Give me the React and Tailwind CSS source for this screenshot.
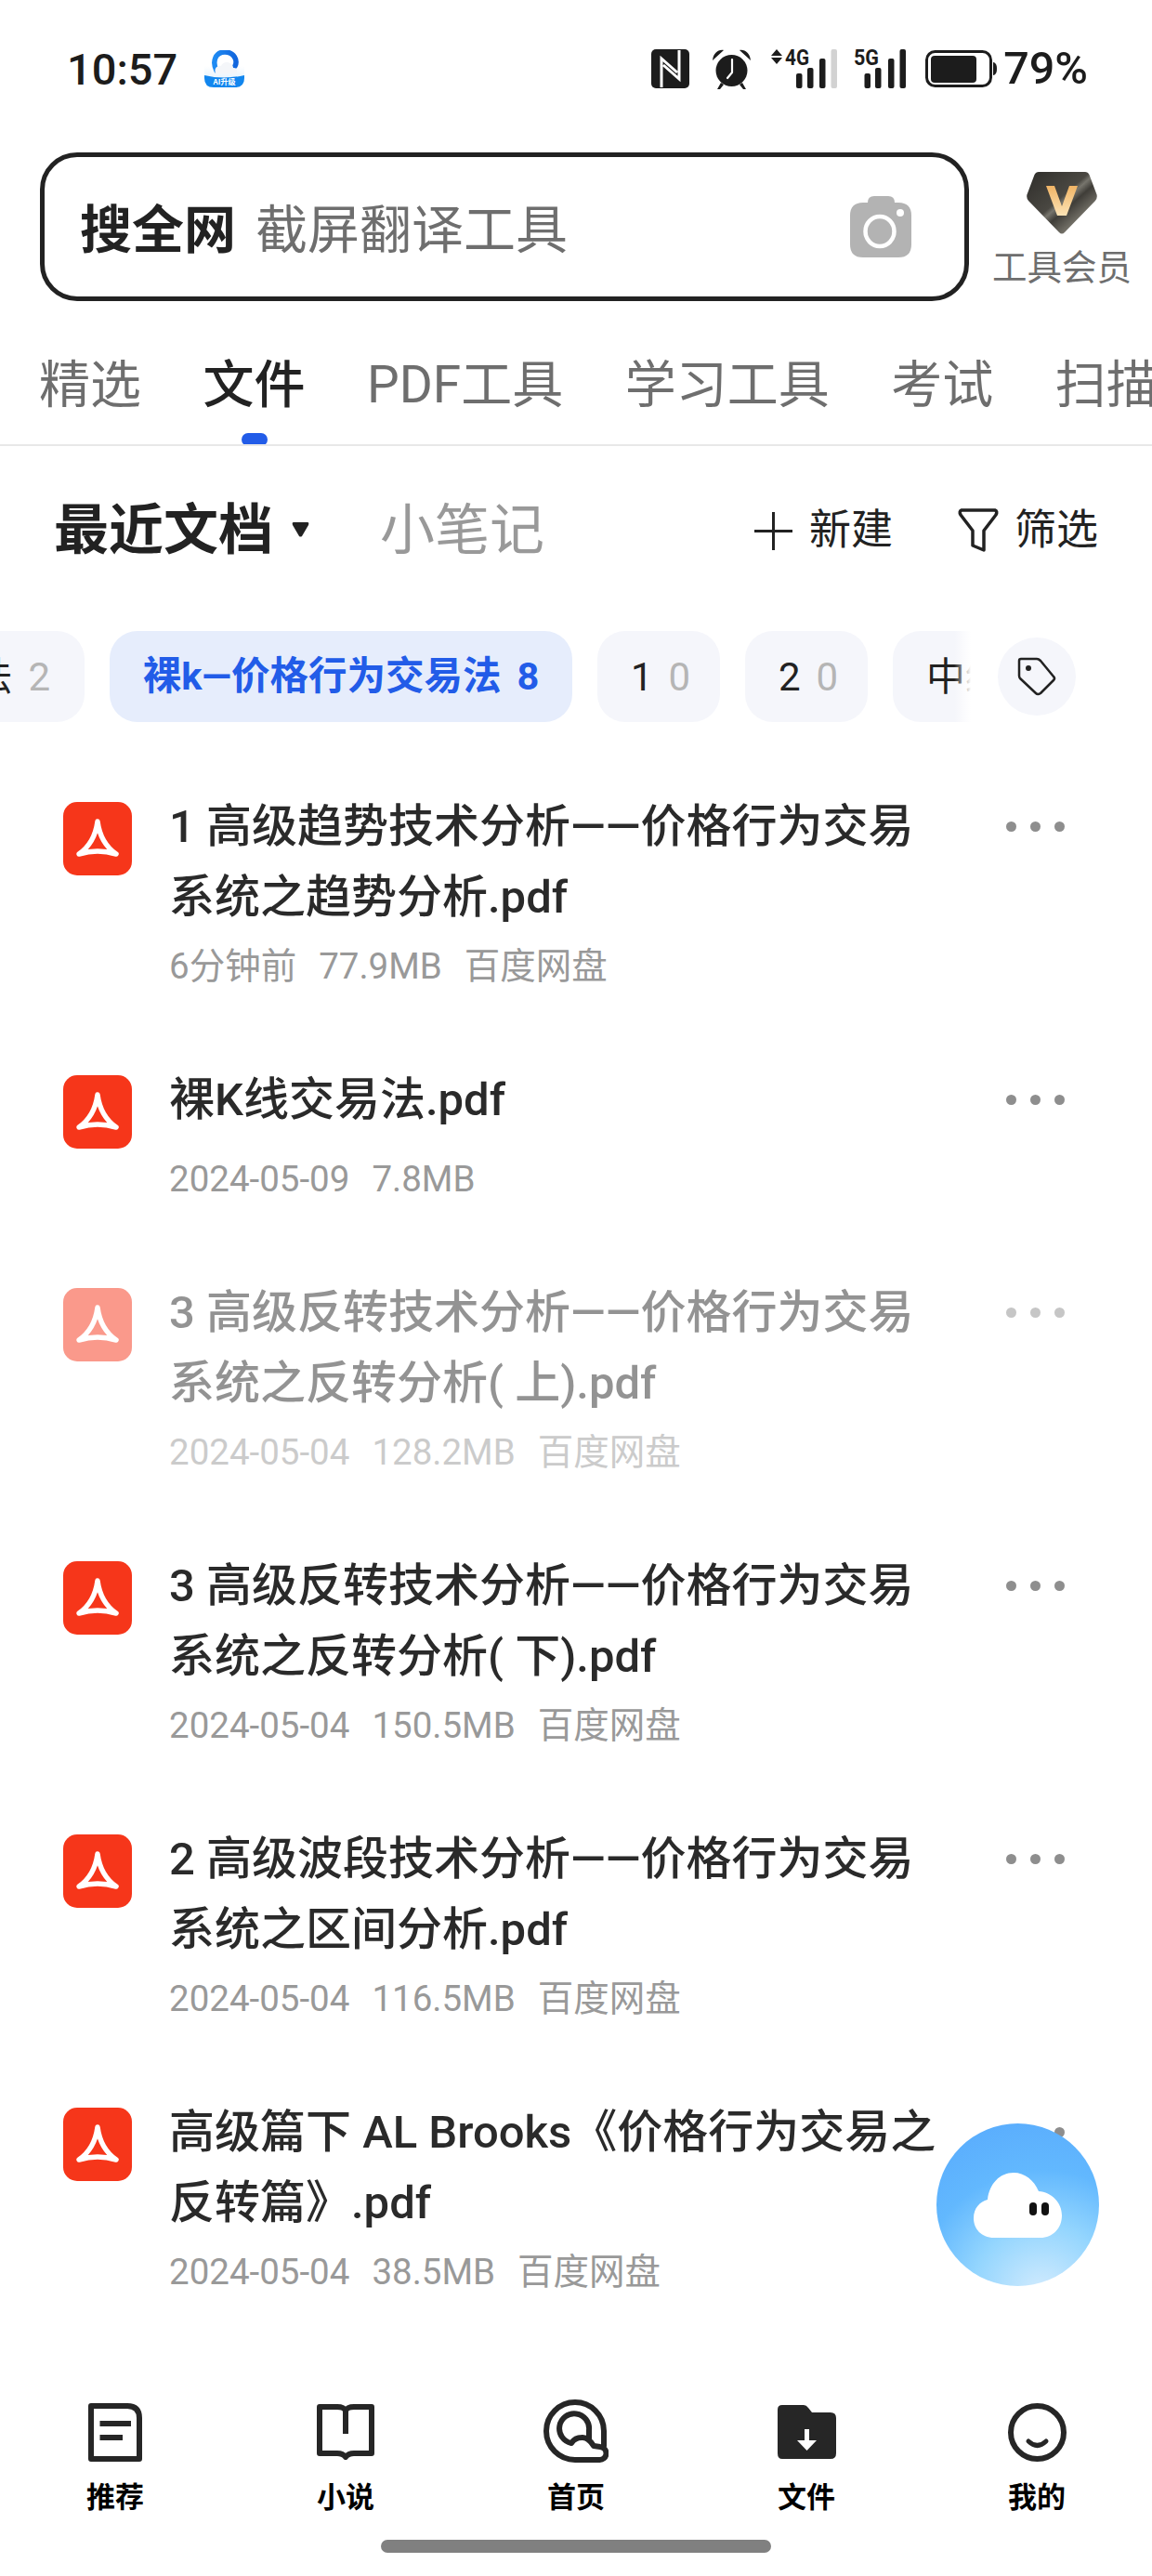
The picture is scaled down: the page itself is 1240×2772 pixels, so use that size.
const TABS = [
  { text: '精选' },
  { text: '文件', active: true },
  { text: 'PDF工具' },
  { text: '学习工具' },
  { text: '考试' },
  { text: '扫描' },
];

const FILES = [
  { lines: ['1 高级趋势技术分析——价格行为交易', '系统之趋势分析.pdf'], meta: ['6分钟前', '77.9MB', '百度网盘'] },
  { lines: ['裸K线交易法.pdf'], meta: ['2024-05-09', '7.8MB'] },
  { lines: ['3 高级反转技术分析——价格行为交易', '系统之反转分析( 上).pdf'], meta: ['2024-05-04', '128.2MB', '百度网盘'], faded: true },
  { lines: ['3 高级反转技术分析——价格行为交易', '系统之反转分析( 下).pdf'], meta: ['2024-05-04', '150.5MB', '百度网盘'] },
  { lines: ['2 高级波段技术分析——价格行为交易', '系统之区间分析.pdf'], meta: ['2024-05-04', '116.5MB', '百度网盘'] },
  { lines: ['高级篇下 AL Brooks《价格行为交易之', '反转篇》.pdf'], meta: ['2024-05-04', '38.5MB', '百度网盘'] },
];

function Bars({ xs, lastGray }) {
  const tops = [26, 20, 10, 0];
  return xs.map((x, i) => (
    <rect key={x} x={x} y={tops[i]} width="6.5" height={42 - tops[i]} rx="2" fill={lastGray && i === 3 ? '#d2d2d2' : '#1c1c1c'} />
  ));
}

function StatusIcons() {
  return (
    <div className="ml-auto flex items-center pr-[69px]">
      {/* NFC */}
      <svg width="41" height="42" viewBox="0 0 41 42">
        <rect width="41" height="42" rx="5" fill="#1c1c1c" />
        <path d="M11 41V10l17 15M30 1v31L13 17" fill="none" stroke="#fff" strokeWidth="3" />
      </svg>
      {/* alarma */}
      <svg className="ml-[24px]" width="43" height="44" viewBox="0 0 43 44">
        <circle cx="21.5" cy="24" r="17" fill="#1c1c1c" />
        <path d="M1 13C2 5 7 1 13 2ZM42 13C41 5 36 1 30 2ZM10 37l-4 7h3l4-5zM33 37l4 7h-3l-4-5z" fill="#1c1c1c" />
        <path d="M22 12v14l-5 6" fill="none" stroke="#fff" strokeWidth="2.2" strokeLinecap="round" strokeLinejoin="round" />
      </svg>
      {/* 4G */}
      <svg className="ml-[21px] overflow-visible" width="71" height="42" viewBox="0 0 71 42">
        <path d="M6 0l6 7H0zM6 16l6-7H0z" fill="#1c1c1c" />
        <text x="15" y="17" fontSize="23" fontWeight="700" fontFamily="Roboto, sans-serif" textLength="26" lengthAdjust="spacingAndGlyphs" fill="#1c1c1c">4G</text>
        <Bars xs={[27, 39, 52, 64.5]} lastGray />
      </svg>
      {/* 5G */}
      <svg className="ml-[18px] overflow-visible" width="56" height="42" viewBox="0 0 56 42">
        <text x="0" y="17" fontSize="23" fontWeight="700" fontFamily="Roboto, sans-serif" textLength="27" lengthAdjust="spacingAndGlyphs" fill="#1c1c1c">5G</text>
        <Bars xs={[11.5, 23, 37, 49.5]} />
      </svg>
      {/* bateria */}
      <svg className="ml-[21px]" width="77" height="40" viewBox="0 0 77 40">
        <rect x="1.5" y="1.5" width="69" height="37" rx="9" fill="none" stroke="#1c1c1c" strokeWidth="3" />
        <rect x="6" y="6" width="49" height="29" rx="4" fill="#1c1c1c" />
        <path d="M73 13c3 .5 4 3 4 7s-1 6.500-4 7z" fill="#1c1c1c" />
      </svg>
      <span className="ml-[7px] text-[48.500px] leading-none font-medium text-[#1c1c1c]">79%</span>
    </div>
  );
}

function AppIcon() {
  return (
    <svg className="ml-[29px]" width="43" height="40" viewBox="0 0 43 40">
      <defs>
        <linearGradient id="appTop" x1="0" y1="0" x2="0" y2="1">
          <stop offset="0" stopColor="#ffffff" />
          <stop offset="1" stopColor="#d8ecfb" />
        </linearGradient>
        <linearGradient id="appRing" x1="0" y1="0" x2="1" y2="0">
          <stop offset="0" stopColor="#1f8bf3" />
          <stop offset="1" stopColor="#1266dd" />
        </linearGradient>
      </defs>
      <path d="M0 17h43v13q0 10-10 10H10Q0 40 0 30z" fill="url(#appTop)" />
      <path d="M0 27q21 5 43 0v3q0 10-10 10H10Q0 40 0 30z" fill="#1286ee" />
      <path d="M13 22C8 12 12 2 22 2s14 9 11 15" fill="none" stroke="url(#appRing)" strokeWidth="5.500" strokeLinecap="round" />
      <path d="M12 25c-2-5 2-9 6-8 2-6 12-5 13 2 5 0 6 6 1 6z" fill="#f4f6f9" />
      <text x="21.500" y="37" textAnchor="middle" fontSize="8" fontWeight="700" fill="#fff" fontFamily="'Noto Sans CJK SC', sans-serif">AI升级</text>
    </svg>
  );
}

function Camera() {
  return (
    <svg width="66" height="66" viewBox="0 0 66 66">
      <path d="M19 7q0-7 7-7h15q7 0 7 7h4q14 0 14 14v31q0 14-14 14H14Q0 66 0 52V21Q0 7 14 7z" fill="#b3b3b3" />
      <ellipse cx="32" cy="38" rx="15.500" ry="16" fill="none" stroke="#fff" strokeWidth="4.500" />
      <circle cx="54" cy="18" r="4" fill="#fff" />
    </svg>
  );
}

function Diamond() {
  return (
    <svg width="76" height="67" viewBox="0 0 76 67">
      <defs>
        <linearGradient id="gem" x1="0" y1="0" x2="1" y2="1">
          <stop offset="0" stopColor="#2e2d2a" />
          <stop offset="0.45" stopColor="#4a4842" />
          <stop offset="0.5" stopColor="#77756d" />
          <stop offset="0.58" stopColor="#3f3d38" />
          <stop offset="0.8" stopColor="#827f75" />
          <stop offset="1" stopColor="#33322e" />
        </linearGradient>
        <linearGradient id="gold" x1="0" y1="0" x2="0" y2="1">
          <stop offset="0" stopColor="#f0b465" />
          <stop offset="1" stopColor="#fce3b5" />
        </linearGradient>
      </defs>
      <path d="M13 0H63Q66 0 67.500 3L75 23Q77 27 74 31L41 65Q38 68 35 65L2 31Q-1 27 1 23L8.500 3Q10 0 13 0Z" fill="url(#gem)" />
      <path d="M21 15H30L38 37L46 15H55L43 47H33Z" fill="url(#gold)" />
    </svg>
  );
}

function AdobeIcon() {
  return (
    <div className="mt-[11px] flex h-[79px] w-[74px] flex-none items-center justify-center rounded-[15px] bg-[#f6361a]">
      <svg width="74" height="79" viewBox="0 0 74 79">
        <path d="M37 21Q40 44 57 56Q37 50 17 56Q34 44 37 21Z" fill="none" stroke="#fff" strokeWidth="5.500" strokeLinejoin="round" />
      </svg>
    </div>
  );
}

function FileRow({ file }) {
  const single = file.lines.length === 1;
  return (
    <div className={`flex pl-[68px] pr-[94px] ${single ? 'h-[229px]' : 'h-[294px]'} ${file.faded ? 'opacity-50' : ''}`}>
      <AdobeIcon />
      <div className="ml-[40px] min-w-0 flex-1 whitespace-nowrap">
        {file.lines.map((line) => (
          <div key={line} className="text-[49px] leading-[76px] font-medium text-[#2a2a2a]">{line}</div>
        ))}
        <div className={`flex gap-[24px] text-[38.500px] leading-[72px] text-[#999] ${single ? 'mt-[11px]' : ''}`}>
          {file.meta.map((m) => <span key={m}>{m}</span>)}
        </div>
      </div>
      <div className="mt-[32px] flex h-[11px] flex-none gap-[15px]">
        <span className="h-[11px] w-[11px] rounded-full bg-[#8e8e8e]" />
        <span className="h-[11px] w-[11px] rounded-full bg-[#8e8e8e]" />
        <span className="h-[11px] w-[11px] rounded-full bg-[#8e8e8e]" />
      </div>
    </div>
  );
}

function Chip({ label, count }) {
  return (
    <div className="flex h-[98px] w-[132px] flex-none items-center overflow-hidden whitespace-nowrap rounded-[30px] bg-[#f5f6fb] pl-[36px] text-[42px] text-[#222]">
      {label}<span className="ml-[17px] text-[#b5b5b5]">{count}</span>
    </div>
  );
}

const NAV = [
  {
    label: '推荐',
    icon: (
      <svg width="58" height="63" viewBox="0 0 58 63">
        <path d="M3 3H42Q55 3 55 16V60H3Z" fill="none" stroke="#262626" strokeWidth="6" strokeLinejoin="round" />
        <path d="M12.500 19H46V25H12.500ZM12.500 34H37V40H12.500Z" fill="#262626" />
      </svg>
    ),
  },
  {
    label: '小说',
    icon: (
      <svg width="62" height="60" viewBox="0 0 62 60">
        <path d="M3 3H22Q29 3 31 7Q33 3 40 3H59V53H40Q34 53 31 57Q28 53 22 53H3Z" fill="none" stroke="#262626" strokeWidth="6" strokeLinejoin="round" />
        <path d="M31 7V32" fill="none" stroke="#262626" strokeWidth="6" />
      </svg>
    ),
  },
  {
    label: '首页',
    icon: (
      <svg width="70" height="70" viewBox="0 0 70 70">
        <path d="M60 65H34A31 31 0 1 1 65 34V50M60 65a7 7 0 0 0 1-14L54 50Q48 40 41 41Q34 41 30 47A16 16 0 1 1 49 33V44" fill="none" stroke="#262626" strokeWidth="6" strokeLinecap="round" strokeLinejoin="round" />
      </svg>
    ),
  },
  {
    label: '文件',
    icon: (
      <svg width="63" height="58" viewBox="0 0 63 58">
        <path d="M5 0H28Q31 0 33 3L37 8H57Q63 8 63 14V52Q63 58 57 58H5Q0 58 0 52V5Q0 0 5 0Z" fill="#262626" />
        <path d="M29 26H34V38H42L31.500 49L21 38H29Z" fill="#fff" />
      </svg>
    ),
  },
  {
    label: '我的',
    icon: (
      <svg width="63" height="63" viewBox="0 0 63 63">
        <circle cx="31.500" cy="31.500" r="28.500" fill="none" stroke="#262626" strokeWidth="6" />
        <path d="M22 41Q31.500 50 41 41" fill="none" stroke="#262626" strokeWidth="5" strokeLinecap="round" />
      </svg>
    ),
  },
];

export default function App() {
  return (
    <div className="relative flex h-[2772px] w-[1240px] flex-col overflow-hidden bg-white [font-family:Roboto,'Noto_Sans_CJK_SC',sans-serif]">
      {/* Barra de estado */}
      <div className="flex h-[148px] flex-none items-center pl-[72px]">
        <span className="text-[47px] leading-none font-medium text-[#1c1c1c]">10:57</span>
        <AppIcon />
        <StatusIcons />
      </div>

      {/* Buscador */}
      <div className="mt-[16px] flex h-[160px] flex-none items-start pl-[43px]">
        <div className="flex h-[160px] w-[1000px] items-center rounded-[40px] border-[5px] border-[#222] pl-[38px] pr-[57px]">
          <span className="pt-[7px] text-[56px] font-bold text-[#222]">搜全网</span>
          <span className="ml-[21px] pt-[7px] text-[56px] text-[#6e6e6e]">截屏翻译工具</span>
          <div className="ml-auto"><Camera /></div>
        </div>
        <div className="ml-[24px] flex h-[160px] w-[152px] flex-col items-center pt-[21px]">
          <Diamond />
          <span className="mt-[16px] whitespace-nowrap text-[37.500px] leading-[40px] text-[#6e6e6e]">工具会员</span>
        </div>
      </div>

      {/* Pestañas */}
      <div className="flex h-[156px] flex-none gap-[66.500px] overflow-hidden border-b-2 border-[#e8e8e8] pl-[42px]">
        {TABS.map((tab) => (
          <div key={tab.text} className={`relative flex-none whitespace-nowrap pt-[60px] text-[55px] leading-[60px] ${tab.active ? 'font-medium text-[#222]' : 'text-[#6e6e6e]'}`}>
            {tab.text}
            {tab.active && <span className="absolute -bottom-[2px] left-1/2 h-[14px] w-[28px] -translate-x-1/2 rounded-full bg-[#225ce8]" />}
          </div>
        ))}
      </div>

      {/* Cabecera de sección */}
      <div className="flex h-[180px] flex-none items-center pl-[58px] pr-[58px]">
        <span className="pt-[2px] text-[59px] font-bold text-[#222]">最近文档</span>
        <svg className="ml-[20px]" width="19" height="16" viewBox="0 0 19 16"><path d="M2 0H17Q19 0 18 3L11 15Q9.500 16 8 15L1 3Q0 0 2 0Z" fill="#222" /></svg>
        <span className="ml-[76px] pt-[2px] text-[59px] text-[#999]">小笔记</span>
        <div className="ml-auto flex items-center pt-[2px] text-[45px] text-[#222]">
          <svg width="41" height="41" viewBox="0 0 41 41">
            <path d="M0 20.500H41M20.500 0V41" fill="none" stroke="#222" strokeWidth="3" />
          </svg>
          <span className="ml-[18px]">新建</span>
          <svg className="ml-[70px]" width="44" height="48" viewBox="0 0 44 48">
            <path d="M4 2H40Q43 3 41 7L28 24V45L16 40V24L3 7Q1 3 4 2Z" fill="none" stroke="#222" strokeWidth="3.500" strokeLinejoin="round" />
          </svg>
          <span className="ml-[17px]">筛选</span>
        </div>
      </div>

      {/* Etiquetas */}
      <div className="relative mt-[19px] flex h-[98px] flex-none items-center">
        <div className="flex w-[1045px] flex-none gap-[27px] overflow-hidden">
          <div className="-ml-[100px] flex h-[98px] w-[191px] flex-none items-center justify-end rounded-[30px] bg-[#f5f6fb] pr-[37px] text-[42px] text-[#222]">
            法<span className="ml-[17px] text-[#b5b5b5]">2</span>
          </div>
          <div className="flex h-[98px] w-[498px] flex-none items-center justify-center rounded-[30px] bg-[#e6edfc] text-[41.500px] font-bold text-[#225ce8]">
            裸k—价格行为交易法<span className="ml-[17px]">8</span>
          </div>
          <Chip label="1" count="0" />
          <Chip label="2" count="0" />
          <Chip label="中级" count="" />
        </div>
        <div className="absolute left-[1027px] top-0 h-[98px] w-[18px] bg-gradient-to-r from-white/0 to-white" />
        <div className="ml-[29px] flex h-[84px] w-[84px] flex-none items-center justify-center rounded-full bg-[#f5f6fb]">
          <svg width="42" height="42" viewBox="0 0 42 42">
            <path d="M4 2H21Q23 2 25 4L39 21Q41 23 39 25L25 39Q22 41 20 39L3 23Q2 22 2 20V4Q2 2 4 2Z" fill="none" stroke="#222" strokeWidth="2.500" strokeLinejoin="round" />
            <circle cx="12" cy="12" r="3" fill="#222" />
          </svg>
        </div>
      </div>

      {/* Lista de archivos */}
      <div className="mt-[75px] flex-none">
        {FILES.map((file, i) => <FileRow key={i} file={file} />)}
      </div>

      {/* Botón flotante */}
      <div className="absolute left-[1008px] top-[2285px] flex h-[175px] w-[175px] items-center justify-center rounded-full bg-[radial-gradient(circle_at_65%_105%,#d4ecfe_0%,#93d5fe_35%,#62b8fe_62%,#57a9fd_100%)]">
        <svg width="96" height="70" viewBox="0 0 96 70">
          <path d="M22 70C8 70 0 60 0 49C0 38 7 31 15 29C17 12 28 0 43 0C55 0 65 8 70 20C84 21 95 32 95 46C95 60 85 70 72 70Z" fill="#fff" />
          <rect x="60" y="32" width="8" height="14" rx="4" fill="#111" />
          <rect x="73" y="32" width="8" height="14" rx="4" fill="#111" />
        </svg>
      </div>

      {/* Navegación inferior */}
      <div className="mt-auto flex-none">
        <div className="grid grid-cols-5">
          {NAV.map((item) => (
            <div key={item.label} className="flex flex-col items-center">
              <div className="flex h-[70px] items-center justify-center">{item.icon}</div>
              <span className="mt-[21px] text-[31px] leading-[30px] font-bold text-black">{item.label}</span>
            </div>
          ))}
        </div>
        <div className="mx-auto mb-[25px] mt-[30px] h-[14px] w-[420px] rounded-full bg-[#808080]" />
      </div>
    </div>
  );
}
